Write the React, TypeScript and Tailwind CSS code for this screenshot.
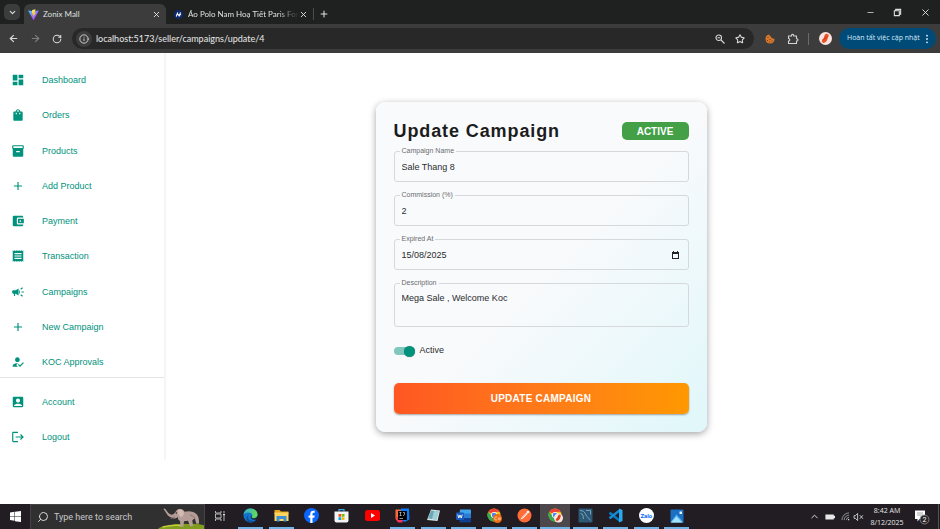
import { useId, useState } from "react";
import type { ReactNode } from "react";
import {
  MdAccountBalanceWallet,
  MdAccountBox,
  MdAdd,
  MdCampaign,
  MdDashboard,
  MdHowToReg,
  MdInventory2,
  MdLogout,
  MdReceipt,
  MdShoppingBag,
} from "react-icons/md";
import {
  ArrowLeft,
  ArrowRight,
  ChevronDown,
  ChevronUp,
  Info,
  Minus,
  Plus,
  RotateCw,
  Search,
  Star,
  X,
} from "lucide-react";

const BROWSER_FONT = "font-['Lato','Noto_Sans',sans-serif]";
const TASKBAR_FONT = "font-['Roboto','Noto_Sans',sans-serif]";
const PAGE_FONT = "font-['Liberation_Sans',Arial,sans-serif]";

/* ---------- Browser chrome ---------- */

function ViteLogo() {
  return (
    <svg viewBox="0 0 32 32" className="size-[11px] shrink-0" aria-hidden="true">
      <defs>
        <linearGradient id="vite-a" x1="0" y1="0" x2="0.7" y2="1">
          <stop offset="0" stopColor="#41d1ff" />
          <stop offset="1" stopColor="#bd34fe" />
        </linearGradient>
        <linearGradient id="vite-b" x1="0.4" y1="0" x2="0.5" y2="1">
          <stop offset="0" stopColor="#ffea83" />
          <stop offset="1" stopColor="#ffa800" />
        </linearGradient>
      </defs>
      <path d="M31 6 17 31q-1 1.500-2 0L1 6q-1-2 1-2l14 2.500L30 4q2 0 1 2Z" fill="url(#vite-a)" />
      <path d="m22 1-10 2-.8 11 3-.6-.8 4.500 2.500-.7-1.300 8L23 10l-3.500.7Z" fill="url(#vite-b)" />
    </svg>
  );
}

function ShopLogo() {
  return (
    <svg viewBox="0 0 18 18" className="size-[9px] shrink-0" aria-hidden="true">
      <circle cx="9" cy="9" r="9" fill="#0c2a72" />
      <path d="m4.500 13 3-8M10 13l3-8M5 10q2.500-3 4 0 2 2 4.500-2" fill="none" stroke="#fff" strokeWidth="2.200" />
    </svg>
  );
}

function BrowserTabs() {
  return (
    <div className="flex h-6 items-end bg-[#1f2120] text-[#dfe1e0]">
      <button aria-label="Search tabs" className="mb-1 ml-1 flex size-4 items-center justify-center self-end rounded-[5px] bg-[#3c3c3c]">
        <ChevronDown size={9} strokeWidth={3} />
      </button>
      <div className="ml-1 flex h-5 w-[142px] items-center rounded-t-md bg-[#3c3c3c] pr-[5px] pl-1">
        <ViteLogo />
        <span className="ml-1 flex-1 text-[8px] leading-3">Zonix Mall</span>
        <button aria-label="Close Zonix Mall">
          <X size={9} strokeWidth={2.5} />
        </button>
      </div>
      <div className="flex h-5 w-[142px] items-center pr-[6px] pl-2">
        <ShopLogo />
        <span className="ml-[5px] mask-r-from-80% text-[8px] leading-3 whitespace-nowrap">
          Áo Polo Nam Hoạ Tiết Paris For
        </span>
        <button aria-label="Close second tab" className="ml-auto">
          <X size={9} strokeWidth={2.5} />
        </button>
      </div>
      <div className="mb-1 ml-[5px] h-3 w-px bg-[#4a4c4b]" />
      <button aria-label="New tab" className="ml-[5px] flex h-5 items-center">
        <Plus size={10} strokeWidth={2.5} />
      </button>
      <div className="ml-auto flex h-6 items-center gap-[18px] pr-[9px]">
        <button aria-label="Minimize">
          <Minus size={9} />
        </button>
        <button aria-label="Restore">
          <svg viewBox="0 0 10 10" className="size-[9px]" fill="none" stroke="currentColor" strokeWidth="1.200">
            <path d="M1.500 3h5.500v5.500H1.500ZM3 3V1.500h5.500V7H7" />
          </svg>
        </button>
        <button aria-label="Close window">
          <X size={11} strokeWidth={2} />
        </button>
      </div>
    </div>
  );
}

function CookieIcon() {
  return (
    <svg viewBox="0 0 20 20" className="size-[10px]" aria-hidden="true">
      <path d="M9 1q-1 4 3 4 0 4 4 4l3 1a9 9 0 1 1-10-9Z" fill="#d8792e" />
      <g fill="#5a2b10">
        <circle cx="6" cy="7" r="1.200" />
        <circle cx="10" cy="11" r="1.200" />
        <circle cx="5" cy="13" r="1.100" />
        <circle cx="14" cy="14" r="1.200" />
        <circle cx="9" cy="16" r="1" />
      </g>
    </svg>
  );
}

function PuzzleIcon() {
  return (
    <svg viewBox="0 0 24 24" className="size-[12px]" fill="none" stroke="#d5d5d5" strokeWidth="2.200" strokeLinejoin="round" aria-hidden="true">
      <path d="M3 6h6V5a2.200 2.200 0 0 1 4.400 0v1H19v5.500h.8a2.200 2.200 0 0 1 0 4.400H19V21H3v-5a2.500 2.500 0 0 0 0-5Z" />
    </svg>
  );
}

function BrowserToolbar() {
  return (
    <div className="flex h-[29px] items-center bg-[#3c3c3c] pr-1 pl-2 text-[#d9d9d9]">
      <button aria-label="Back">
        <ArrowLeft size={11} strokeWidth={2.5} />
      </button>
      <button aria-label="Forward" className="ml-[11px] text-[#7d7d7d]">
        <ArrowRight size={11} strokeWidth={2.5} />
      </button>
      <button aria-label="Reload" className="ml-[11px]">
        <RotateCw size={10} strokeWidth={2.5} />
      </button>
      <div className="ml-[10px] flex h-[21px] flex-1 items-center rounded-full bg-[#282828] pr-[9px] pl-1">
        <button aria-label="Site information" className="flex size-4 items-center justify-center rounded-full bg-[#3c3c3c]">
          <Info size={10} strokeWidth={2.2} />
        </button>
        <input
          aria-label="Address"
          defaultValue="localhost:5173/seller/campaigns/update/4"
          className="ml-1 h-4 min-w-0 flex-1 bg-transparent text-[9px] text-[#e8e8e8] outline-none"
        />
        <button aria-label="Zoom">
          <svg viewBox="0 0 20 20" className="size-[10px]" fill="none" stroke="currentColor" strokeWidth="2.200" aria-hidden="true">
            <circle cx="7.500" cy="7.500" r="5.500" />
            <path d="m12 12 7 7M5 7.500h5" />
          </svg>
        </button>
        <button aria-label="Bookmark" className="ml-[10px]">
          <Star size={10} strokeWidth={2.5} />
        </button>
      </div>
      <button aria-label="Cookie extension" className="ml-[11px]">
        <CookieIcon />
      </button>
      <button aria-label="Extensions" className="ml-3">
        <PuzzleIcon />
      </button>
      <div className="ml-[9px] h-3 w-px bg-[#6a6a6a]" />
      <button aria-label="Profile" className="ml-[10px]">
        <svg viewBox="0 0 24 24" className="size-[13px]">
          <circle cx="12" cy="12" r="12" fill="#fbe4df" />
          <path d="M14 3q6 1 3 6-1 2-2 6-3 6-8 5-3-2-1-6 4-3 4-7 1-4 4-4Z" fill="#ea5226" />
          <path d="m9 14 5-5" stroke="#a52a14" strokeWidth="1.500" />
        </svg>
      </button>
      <button className="ml-[7px] flex h-[21px] w-[97px] items-center justify-between rounded-full bg-[#004a77] pr-[7px] pl-2 text-[7px] text-[#d6ebfa]">
        <span className="font-['Open_Sans','Noto_Sans',sans-serif] whitespace-nowrap">Hoàn tất việc cập nhật</span>
        <svg viewBox="0 0 4 12" className="h-[10px] w-[4px]" fill="currentColor" aria-hidden="true">
          <circle cx="2" cy="2" r="1.100" />
          <circle cx="2" cy="6" r="1.100" />
          <circle cx="2" cy="10" r="1.100" />
        </svg>
      </button>
    </div>
  );
}

/* ---------- Seller sidebar ---------- */

const mainLinks = [
  { label: "Dashboard", Icon: MdDashboard },
  { label: "Orders", Icon: MdShoppingBag },
  { label: "Products", Icon: MdInventory2 },
  { label: "Add Product", Icon: MdAdd },
  { label: "Payment", Icon: MdAccountBalanceWallet },
  { label: "Transaction", Icon: MdReceipt },
  { label: "Campaigns", Icon: MdCampaign },
  { label: "New Campaign", Icon: MdAdd },
  { label: "KOC Approvals", Icon: MdHowToReg },
];

const accountLinks = [
  { label: "Account", Icon: MdAccountBox },
  { label: "Logout", Icon: MdLogout },
];

function SidebarLink({ label, Icon }: (typeof mainLinks)[number]) {
  return (
    <a href="#" className="flex h-[30px] items-center gap-[17px] pl-[11px] text-[9px] leading-[14px] text-[#00927c]">
      <Icon size={14} />
      {label}
    </a>
  );
}

function Sidebar() {
  return (
    <nav className="w-[166px] shrink-0 self-start border-r-2 border-[#f5f5f5] pt-3 pb-2">
      <div className="flex h-[312px] flex-col justify-between">
        {mainLinks.map((link) => (
          <SidebarLink key={link.label} {...link} />
        ))}
      </div>
      <hr className="border-[#e4e4e4]" />
      <div className="flex flex-col gap-[5px] pt-[9px]">
        {accountLinks.map((link) => (
          <SidebarLink key={link.label} {...link} />
        ))}
      </div>
    </nav>
  );
}

/* ---------- Campaign form ---------- */

function Field({ label, children }: { label: string; children: (id: string) => ReactNode }) {
  const id = useId();
  return (
    <fieldset className="min-w-0 rounded-[3px] border border-[#d6d9dc] px-[7px]">
      <legend className="-ml-[2px] h-2 px-[2px] text-[7px] leading-2 text-[#6b6d70]">
        <label htmlFor={id} className="block">
          {label}
        </label>
      </legend>
      {children(id)}
    </fieldset>
  );
}

const INPUT = "block h-[26px] w-full min-w-0 bg-transparent pb-[3px] text-[9px] text-[#2a2c2e] outline-none";

function CampaignForm() {
  const [active, setActive] = useState(true);
  return (
    <form
      onSubmit={(e) => e.preventDefault()}
      className="w-[331px] rounded-[9px] bg-linear-135 from-[#f9fafc] from-50% to-[#e0f7fa] px-[18px] pt-[17px] pb-[18px] shadow-[0_2px_7px_rgba(0,0,0,0.36)]"
    >
      <div className="flex h-6 items-center justify-between">
        <h1 className="text-[18px] leading-6 font-bold tracking-wider text-[#1c1c1c]">Update Campaign</h1>
        <span className="flex h-[18px] w-[67px] items-center justify-center rounded-[5px] bg-[#43a047] text-[10px] font-bold text-white">
          ACTIVE
        </span>
      </div>
      <div className="mt-1 flex flex-col gap-[9px]">
        <Field label="Campaign Name">
          {(id) => <input id={id} defaultValue="Sale Thang 8" className={INPUT} />}
        </Field>
        <Field label="Commission (%)">
          {(id) => <input id={id} inputMode="numeric" defaultValue="2" className={INPUT} />}
        </Field>
        <Field label="Expired At">
          {(id) => (
            <div className="flex items-center">
              <input id={id} defaultValue="15/08/2025" className={INPUT} />
              <button type="button" aria-label="Open calendar" className="mr-px shrink-0 pb-[2px]">
                <svg viewBox="0 0 9 9" className="size-[9px]" aria-hidden="true">
                  <path d="M1 1h1V0h1v1h3V0h1v1h1v7H1ZM2 3v4h5V3Z" fill="#222" fillRule="evenodd" />
                </svg>
              </button>
            </div>
          )}
        </Field>
        <Field label="Description">
          {(id) => (
            <textarea
              id={id}
              defaultValue="Mega Sale , Welcome Koc"
              className="block h-[39px] w-full resize-none bg-transparent pt-[5px] text-[9px] leading-[13px] text-[#2a2c2e] outline-none"
            />
          )}
        </Field>
      </div>
      <label className="mt-[18px] flex h-3 w-fit items-center gap-[5px] text-[9px] text-[#2a2c2e]">
        <input type="checkbox" role="switch" checked={active} onChange={() => setActive(!active)} className="peer sr-only" />
        <span className="flex h-2 w-[21px] items-center rounded-full bg-[#80c8bd] peer-checked:justify-end">
          <span className="size-[11px] rounded-full bg-[#00927c] shadow-[0_0_1px_rgba(0,0,0,0.4)]" />
        </span>
        Active
      </label>
      <button
        type="submit"
        className="mt-[26px] block h-[31px] w-full rounded-[5px] bg-linear-to-r from-[#ff5722] to-[#ff9800] pb-px text-[10px] font-bold tracking-wide text-white shadow-[0_1px_2px_rgba(0,0,0,0.35)]"
      >
        UPDATE CAMPAIGN
      </button>
    </form>
  );
}

/* ---------- Taskbar ---------- */

const ICON = "size-[15px]";

function ChromeIcon({ badge }: { badge: ReactNode }) {
  return (
    <svg viewBox="0 0 30 30" className={ICON}>
      <circle cx="14" cy="14" r="13" fill="#fbc116" />
      <path d="M14 14 2.700 7.500A13 13 0 0 1 25.300 7.500L14 8Z" fill="#e94335" />
      <path d="M2.700 7.500A13 13 0 0 0 14 27l5-9-10-1Z" fill="#34a853" />
      <circle cx="14" cy="14" r="6" fill="#fff" />
      <circle cx="14" cy="14" r="4.600" fill="#4285f4" />
      {badge}
    </svg>
  );
}

const apps: { name: string; running?: boolean; active?: boolean; icon: ReactNode }[] = [
  {
    name: "Task View",
    icon: (
      <svg viewBox="0 0 24 24" className="size-3" fill="none" stroke="#c4c4c4" strokeWidth="1.800">
        <path d="M3 2v4h11V2M3 22v-4h11v4M3 8v8h11V8ZM20 2v5M20 12v10" />
        <path d="M18 8h4v3h-4Z" fill="#dedede" stroke="none" />
      </svg>
    ),
  },
  {
    name: "Edge",
    running: true,
    icon: (
      <svg viewBox="0 0 30 30" className={ICON}>
        <defs>
          <linearGradient id="edge-a" x1="0" y1="0" x2="1" y2="0.3">
            <stop offset="0" stopColor="#2da7e8" />
            <stop offset="1" stopColor="#62da55" />
          </linearGradient>
        </defs>
        <circle cx="15" cy="15" r="14" fill="#1173ca" />
        <path d="M1 14C2 5 8 1 15 1c8 0 14 5 14 12 0 5-4 7-8 7-3 0-5-1-3-3 3-4-2-8-7-8-5 0-9 2-10 5Z" fill="url(#edge-a)" />
        <path d="M11 14c-3 6 1 12 9 12 3 0 5-1 6-2-3 4-8 5-11 5C6 29 5 19 11 14Z" fill="#0d4f9e" />
        <path d="M18 17c-2 2 0 4 3 4 4 0 7-2 8-6 0 4-1 6-3 8-6 2-12-1-10-7Z" fill="#231f24" />
      </svg>
    ),
  },
  {
    name: "File Explorer",
    running: true,
    icon: (
      <svg viewBox="0 0 30 26" className="h-[13px] w-[15px]">
        <path d="M1 2h10l3 3h15v5H1Z" fill="#e8a51c" />
        <path d="M1 7h28v17H1Z" fill="#fcd462" />
        <path d="M5 14h20v11h-6v-5h-8v5H5Z" fill="#3f8fd4" />
      </svg>
    ),
  },
  {
    name: "Facebook",
    icon: (
      <svg viewBox="0 0 24 24" className={ICON}>
        <circle cx="12" cy="12" r="12" fill="#0866ff" />
        <path d="M10 24v-8.500H7.300V12H10v-2c0-4 2-5.700 5-5.700 1 0 1.700.1 2.200.2v3.200h-1.600c-1.500 0-2 .7-2 2V12h3.500l-.6 3.500h-2.900V24Z" fill="#fff" />
      </svg>
    ),
  },
  {
    name: "Microsoft Store",
    icon: (
      <svg viewBox="0 0 30 30" className={ICON}>
        <path d="M10 7V3h10v4" fill="none" stroke="#38a9e6" strokeWidth="2.500" />
        <path d="M1 7h28v18q0 4-4 4H5q-4 0-4-4Z" fill="#f2f4f5" />
        <path d="M9 12h5.500v5.500H9Z" fill="#f25022" />
        <path d="M15.500 12H21v5.500h-5.500Z" fill="#7fba00" />
        <path d="M9 18.500h5.500V24H9Z" fill="#00a4ef" />
        <path d="M15.500 18.500H21V24h-5.500Z" fill="#ffb900" />
      </svg>
    ),
  },
  {
    name: "YouTube",
    icon: (
      <svg viewBox="0 0 30 22" className="h-[11px] w-[15px]">
        <rect width="30" height="22" rx="5" fill="#f00" />
        <path d="m12 6 8 5-8 5Z" fill="#fff" />
      </svg>
    ),
  },
  {
    name: "IntelliJ IDEA",
    running: true,
    icon: (
      <svg viewBox="0 0 30 30" className={ICON}>
        <path d="M1 3h12l6 14-5 11H6L1 22Z" fill="#fc6d35" />
        <path d="M12 1h16l1 22-10 5-9-7Z" fill="#087cfa" />
        <path d="m1 17 14 6v6H6Z" fill="#fe315d" />
        <path d="M6 6h18v18H6Z" fill="#000" />
        <path d="M9 9h4M11 9v6M9 15h4M16 9h3v4q0 2-3 2M9 21h7" fill="none" stroke="#ddd" strokeWidth="1.300" />
      </svg>
    ),
  },
  {
    name: "Notepad",
    running: true,
    icon: (
      <svg viewBox="0 0 30 30" className={ICON}>
        <path d="M10 3 28 5l-5 21L2 24Z" fill="#d8e7ea" />
        <path d="m10 5 15 2-4 16L4 21Z" fill="#69a9b7" />
        <path d="m16 6 9 1-4 16-9-1Z" fill="#9ed0d8" />
      </svg>
    ),
  },
  {
    name: "Word",
    running: true,
    icon: (
      <svg viewBox="0 0 30 28" className="h-[14px] w-[15px]">
        <path d="M8 1h20q2 0 2 2v7H7Z" fill="#41a5ee" />
        <path d="M7 9h23v9H7Z" fill="#2b7cd3" />
        <path d="M7 18h23v7q0 2-2 2H7Z" fill="#103f91" />
        <rect y="7" width="16" height="15" rx="2" fill="#185abd" />
        <path d="m3.500 11 2 7L8 12l2.500 6 2-7" fill="none" stroke="#fff" strokeWidth="1.800" />
      </svg>
    ),
  },
  {
    name: "Chrome, work profile",
    running: true,
    icon: (
      <ChromeIcon
        badge={
          <>
            <circle cx="21" cy="21" r="9" fill="#ef6c12" />
            <path d="M20 18q-5-1-5 3t5 3M26 19v5M26 21.500a2 2 0 1 0-1 2" fill="none" stroke="#fbd9b5" strokeWidth="1.600" />
          </>
        }
      />
    ),
  },
  {
    name: "Postman",
    running: true,
    icon: (
      <svg viewBox="0 0 30 30" className={ICON}>
        <circle cx="15" cy="15" r="14" fill="#ff6c37" />
        <path d="m7 23 3-5 9-9 2.500 2.500-9 9Z" fill="#fff" />
        <circle cx="22" cy="8" r="2.600" fill="#fff" />
        <path d="m10 20 9-9" stroke="#ff6c37" />
      </svg>
    ),
  },
  {
    name: "Chrome",
    running: true,
    active: true,
    icon: (
      <ChromeIcon
        badge={
          <>
            <circle cx="21" cy="20" r="9" fill="#fbe4df" />
            <path d="M23 13q4 1 2 5-2 7-7 8-4-1-2-4 3-2 4-6 1-3 3-3Z" fill="#d8401e" />
          </>
        }
      />
    ),
  },
  {
    name: "MySQL Workbench",
    running: true,
    icon: (
      <svg viewBox="0 0 30 30" className={ICON}>
        <rect x="1" y="1" width="28" height="28" rx="2" fill="#2c5878" />
        <path d="M4 5q7-1 10 5 3 8 7 10l4 5M5 11q4 0 5 4l1 7M16 5h9v8" fill="none" stroke="#8fb2c5" strokeWidth="1.600" />
      </svg>
    ),
  },
  {
    name: "Visual Studio Code",
    running: true,
    icon: (
      <svg viewBox="0 0 30 30" className={ICON}>
        <path d="m2 10 3-2.500L23 22v6L2 12Z" fill="#0b78c0" />
        <path d="m2 20 3 2.500L23 8V2L2 18Z" fill="#168bd2" />
        <path d="m22 1 7 3v22l-7 3Z" fill="#2ba9f0" />
      </svg>
    ),
  },
  {
    name: "Zalo",
    running: true,
    icon: (
      <span className="flex size-[15px] items-center justify-center rounded-full bg-white text-[6px] font-bold text-[#0868f8]">
        Zalo
      </span>
    ),
  },
  {
    name: "Photos",
    running: true,
    icon: (
      <svg viewBox="0 0 28 28" className="size-[14px]">
        <rect x="1" y="1" width="26" height="26" rx="2" fill="#1c70c4" />
        <path d="M1 27 13 11l14 16Z" fill="#55b5ef" />
        <path d="m2 27 11-12 11 12Z" fill="#a5e1fa" />
        <path d="M19 5h5v5h-5Z" fill="#e7f5fd" />
      </svg>
    ),
  },
];

function Elephant() {
  return (
    <svg viewBox="0 0 138 72" className="ml-auto h-6 w-[46px]" aria-hidden="true">
      <path d="M0 72q8-10 30-9 25-9 60-6 30-3 48 4v11Z" fill="#7f9c1d" />
      <path d="M14 66q30-8 60-4" stroke="#c6cc3a" strokeWidth="4" fill="none" />
      <path d="M52 22q4-11 16-10 8 1 12 8 24-4 36 8 8 9 7 28h-8l-5-16-7 6 2 18h-9l-6-17-12 2-2 17h-8l-2-18q-8-4-6-12-4 5-14 4-14-2-23-18-4-7-7-10 3-4 7 1 8 14 17 16 7 1 12-7Z" fill="#b59d97" />
      <path d="M60 14q14-4 18 10-2 12-10 12-10-8-8-22Z" fill="#d2bab2" />
      <path d="m46 36-8 5 14-1ZM96 30q14 2 16 14" fill="none" stroke="#776660" strokeWidth="2" />
      <circle cx="55" cy="24" r="2" fill="#211" />
    </svg>
  );
}

function Taskbar() {
  return (
    <footer className="flex h-[25px] shrink-0 items-stretch bg-[#211d22] text-[#e8e8e8]">
      <button aria-label="Start" className="flex w-[30px] items-center justify-center">
        <svg viewBox="0 0 22 22" className="size-[11px]" fill="#fff">
          <path d="m0 3 9-1.300V10H0ZM10 1.500 22 0v10H10ZM0 11h9v8.300L0 18ZM10 11h12v11l-12-1.700Z" />
        </svg>
      </button>
      <div className="flex w-[175px] items-center border border-b-0 border-[#454245] bg-[#313031] pl-[6px]">
        <Search size={12} strokeWidth={1.8} className="-scale-x-100" />
        <input
          aria-label="Search Windows"
          placeholder="Type here to search"
          className="ml-[5px] h-5 w-[92px] bg-transparent text-[9px] outline-none placeholder:text-[#c9c9c9]"
        />
        <Elephant />
      </div>
      <div className="grid w-[487px] grid-cols-16">
        {apps.map((app) => (
          <button
            key={app.name}
            aria-label={app.name}
            className={`flex flex-col items-center ${app.active ? "bg-[#4b474b]" : ""}`}
          >
            <span className="flex flex-1 items-center justify-center">{app.icon}</span>
            <span className={`h-[2px] ${app.active ? "w-full" : "w-[25px]"} ${app.running ? "bg-[#70b5ea]" : ""}`} />
          </button>
        ))}
      </div>
      <div className="ml-auto flex items-center pr-px">
        <ChevronUp size={11} strokeWidth={2} />
        <svg viewBox="0 0 24 14" className="ml-[5px] h-[6px] w-[10px]" fill="currentColor" aria-hidden="true">
          <path d="M1 1h20v12H1ZM21 4h3v6h-3Z" />
        </svg>
        <svg viewBox="0 0 20 20" className="ml-[6px] size-[9px]" fill="none" stroke="#aaa" strokeWidth="1.800" aria-hidden="true">
          <path d="M2 18A16 16 0 0 1 18 2M7 18A11 11 0 0 1 18 7M12 18a6 6 0 0 1 6-6" />
          <circle cx="17" cy="17" r="1.500" fill="#fff" stroke="none" />
        </svg>
        <svg viewBox="0 0 24 18" className="ml-[3px] h-[8px] w-[11px]" fill="none" stroke="currentColor" strokeWidth="1.800" aria-hidden="true">
          <path d="M2 6h3l5-5v16l-5-5H2ZM15 5l7 8M22 5l-7 8" />
        </svg>
        <div className="ml-[2px] w-[42px] text-center font-['Open_Sans','Noto_Sans',sans-serif] text-[7px] leading-[12px] whitespace-nowrap">
          <div>8:42 AM</div>
          <div>8/12/2025</div>
        </div>
        <button aria-label="Notifications, 2 new" className="ml-[6px]">
          <svg viewBox="0 0 32 32" className="size-4">
            <path d="M2 3h20v17H11l-4 5v-5H2Z" fill="#fff" />
            <path d="M6 8h12M6 12h12" stroke="#888" strokeWidth="1.500" />
            <circle cx="21" cy="21" r="9" fill="#29262a" stroke="#999" strokeWidth="1.500" />
            <text x="21" y="26" textAnchor="middle" fontSize="14" fill="#fff">
              2
            </text>
          </svg>
        </button>
        <div className="ml-2 h-[25px] w-px bg-[#555155]" />
      </div>
    </footer>
  );
}

export default function App() {
  return (
    <div className="flex min-h-screen flex-col bg-white">
      <header className={BROWSER_FONT}>
        <BrowserTabs />
        <BrowserToolbar />
      </header>
      <div className={`flex flex-1 ${PAGE_FONT}`}>
        <Sidebar />
        <main className="flex flex-1 items-start justify-center pt-[49px] pr-6">
          <CampaignForm />
        </main>
      </div>
      <div className={TASKBAR_FONT}>
        <Taskbar />
      </div>
    </div>
  );
}
